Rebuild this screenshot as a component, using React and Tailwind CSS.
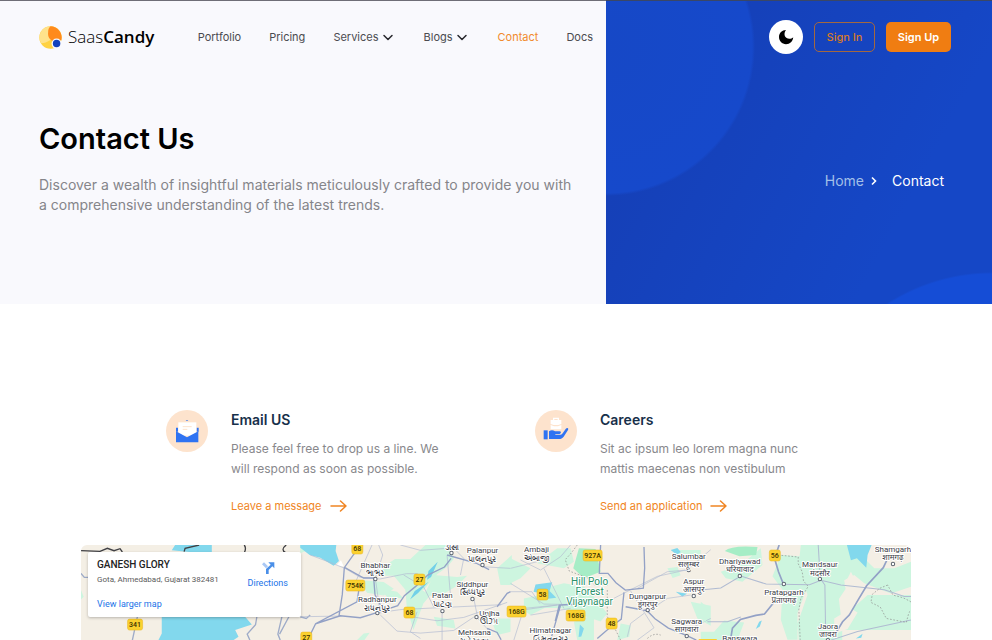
import React from "react";

const UI = "font-['Inter',sans-serif]";

function Logo() {
  return (
    <a href="#home" className="flex items-center gap-[6px] text-black">
      <svg width="23" height="23" viewBox="0 0 68 68" aria-hidden="true">
        <circle cx="34" cy="34" r="33" fill="#ffd243" />
        <path d="M34 1A33 33 0 0 0 6 51C26 50 44 38 42 20C41 11 38 5 34 1Z" fill="#ffe28b" />
        <path d="M34 1A33 33 0 0 1 66 42C60 44 55 42 48 47C34 44 25 34 27 19C27 11 29 5 34 1Z" fill="#ff8a1c" />
        <circle cx="52" cy="52" r="15" fill="#f9f9fd" />
        <circle cx="52" cy="52" r="11" fill="#1443bd" />
      </svg>
      <span className="font-['Open_Sans',sans-serif] text-[17px] leading-6 font-light">
        Saas<b className="font-semibold">Candy</b>
      </span>
    </a>
  );
}

function Chevron() {
  return (
    <svg width="16" height="16" viewBox="0 0 16 16" fill="none" stroke="#26262b" strokeWidth="1.5" strokeLinecap="round" strokeLinejoin="round" aria-hidden="true">
      <path d="M4 6.5l4 4 4-4" />
    </svg>
  );
}

const links = [
  { label: "Portfolio" },
  { label: "Pricing" },
  { label: "Services", menu: true },
  { label: "Blogs", menu: true },
  { label: "Contact", active: true },
  { label: "Docs" },
];

function Nav() {
  return (
    <nav className="flex items-center gap-7 text-[11px] leading-4 text-[#4b4b50]">
      {links.map((l) => (
        <a key={l.label} href={"#" + l.label.toLowerCase()} className={l.active ? "text-[#f18a2c]" : "flex items-center gap-px"}>
          {l.label}
          {l.menu && <Chevron />}
        </a>
      ))}
    </nav>
  );
}

function Hero() {
  return (
    <section className="grid grid-cols-[606fr_386fr]">
      <div className="border-t border-[#6f6e77] bg-[#f9f9fd] pb-[89px] pl-[39px]">
        <header className="flex h-[72px] items-center justify-between pr-[13px]">
          <Logo />
          <Nav />
        </header>
        <h1 className="mt-[46px] text-[29px] leading-10 font-semibold text-black">Contact Us</h1>
        <p className="mt-4 max-w-[540px] text-[14px] leading-5 text-[#85858a]">
          Discover a wealth of insightful materials meticulously crafted to provide you with a comprehensive understanding of the latest trends.
        </p>
      </div>
      <div className="border-t border-[#3a4766] bg-[radial-gradient(circle_at_0_46px,#1648c6_0,#1649cb_146px,transparent_149px),radial-gradient(circle_at_386px_465px,#154dd6_0,#154dd6_192px,transparent_194px),linear-gradient(118deg,#1540b8_20%,#1547c6_75%)]">
        <div className="flex h-[72px] items-center justify-end gap-[11px] pr-[41px]">
          <button type="button" aria-label="Dark mode" className="flex size-[34px] items-center justify-center rounded-full bg-white">
            <svg width="16" height="16" viewBox="0 0 16 16" fill="#000" aria-hidden="true">
              <path d="M8 1C4 1 1 4.100 1 8s3 7.200 7 7.200c3.900 0 7-2.900 7.200-7C13.300 10 10.500 10.300 8.300 8.700C6 7 6 3.500 8 1Z" />
            </svg>
          </button>
          <button type="button" className="h-[30px] w-[61px] rounded-[5px] border border-[#a4683f] text-[11px] font-medium text-[#d97a24]">
            Sign In
          </button>
          <button type="button" className="h-[30px] w-[65px] rounded-[5px] bg-[#f07d12] text-[11px] font-semibold text-white">
            Sign Up
          </button>
        </div>
        <nav aria-label="Breadcrumb" className="mt-24 flex items-center justify-end pr-12 text-[14px] leading-6 text-white">
          <a href="#home" className="text-[#a3c0e8]">Home</a>
          <svg className="mr-[10px] ml-[2px]" width="16" height="16" viewBox="0 0 16 16" fill="none" stroke="#fff" strokeWidth="1.600" aria-hidden="true">
            <path d="M6 4.500l3.500 3.500L6 11.500" />
          </svg>
          <span>Contact</span>
        </nav>
      </div>
    </section>
  );
}

function MailIcon() {
  return (
    <svg width="42" height="42" viewBox="0 0 126 126" aria-hidden="true">
      <circle cx="63" cy="63" r="63" fill="#fde3cd" />
      <path d="M59 33l4-3 4 3zM30 53l6 0v12h-6zM92 53l6 0v12h-6z" fill="#2f73f2" />
      <path d="M37 37h54v40H37z" fill="#fff" />
      <path d="M50 50h27M50 58h14" stroke="#fde3cd" strokeWidth="3" />
      <path d="M30 64l33 18 34-18v33H30z" fill="#2f73f2" />
    </svg>
  );
}

function CareersIcon() {
  return (
    <svg width="42" height="42" viewBox="0 0 126 126" aria-hidden="true">
      <circle cx="63" cy="63" r="63" fill="#fde3cd" />
      <path d="M56 30V25h14v5" fill="none" stroke="#fff" strokeWidth="4" />
      <path d="M47 30h32v12l-9 3h-14l-9-3z" fill="#fff" />
      <path d="M47 45l10 4h12l10-4v13H47z" fill="#fff" />
      <path d="M26 61h12v27H26z" fill="#2f73f2" />
      <path d="M42 64c6-4 12-4 18 0h14c5 0 5 7 0 8H61v2h16c3 0 4-2 6-4l9-13c4-5 10-3 7 3L86 80c-4 5-8 7-14 7H42z" fill="#2f73f2" />
    </svg>
  );
}

function Feature({ icon, title, text, link }) {
  return (
    <article className="flex gap-[23px] pl-[39px]">
      <div className="shrink-0">{icon}</div>
      <div className="max-w-[220px]">
        <h2 className="text-[14px] leading-5 font-semibold text-[#17304a]">{title}</h2>
        <p className="mt-[9px] text-[12px] leading-5 text-[#88888c]">{text}</p>
        <a href="#contact" className="mt-[17px] flex items-center gap-2 text-[11px] leading-5 text-[#f08523]">
          {link}
          <svg width="17" height="12" viewBox="0 0 17 12" fill="none" stroke="currentColor" strokeWidth="1.500" strokeLinecap="round" strokeLinejoin="round" aria-hidden="true">
            <path d="M1 6h15M10.500 1l5.500 5-5.500 5" />
          </svg>
        </a>
      </div>
    </article>
  );
}

const places = [
  ["Bhabhar", 294, 23, "ભાભર", 31],
  ["Radhanpur", 296, 57, "રાધનપુર", 66],
  ["", 371, 0, "ડીસા", 5],
  ["Palanpur", 401, 8, "પાલનપુર", 17],
  ["Siddhpur", 391, 42, "સિધ્ધપુર", 50],
  ["Patan", 361, 53, "પાટણ", 62],
  ["Unjha", 408, 71, "ઊંઝા", 79],
  ["Mehsana", 393, 90, "મહેસાણા", 99],
  ["Ambaji", 455, 7, "અંબાજી", 16],
  ["Himatnagar", 469, 88, "હિંમતનગર", 97],
  ["Dungarpur", 566, 54, "डूंगरपुर", 62],
  ["Salumbar", 607, 14, "सलूम्बर", 22],
  ["Aspur", 612, 39, "आसपुर", 47],
  ["Sagwara", 605, 79, "सागवारा", 87],
  ["Dhariyawad", 658, 19, "धरियावाद", 27],
  ["Mandsaur", 738, 22, "मंदसौर", 31],
  ["Pratapgarh", 702, 50, "प्रतापगढ़", 58],
  ["Shamgarh", 811, 7, "शामगढ़", 15],
  ["Jaora", 746, 84, "जावरा", 92],
  ["Banswara", 658, 96, "", 99],
];

const shields = [
  ["341", 54, 79, 15],
  ["68", 276, 3, 11],
  ["754K", 274, 40, 19],
  ["27", 338, 34, 11],
  ["68", 328, 67, 11],
  ["27", 225, 92, 11],
  ["58", 461, 49, 11],
  ["168G", 435, 66, 19],
  ["168G", 494, 70, 19],
  ["927A", 511, 10, 19],
  ["48", 530, 78, 11],
  ["56", 693, 10, 11],
];

const dots = [[294, 34], [296, 68], [370, 8], [401, 20], [391, 54], [361, 66], [395, 72], [607, 25], [612, 51], [566, 65], [605, 91], [658, 31], [702, 39], [738, 34], [811, 19], [746, 95]];

function MapCanvas() {
  return (
    <svg className="absolute inset-0 size-full" viewBox="0 0 829 95" preserveAspectRatio="xMidYMin slice" role="img" aria-label="Map around Gota, Ahmedabad">
      <rect width="829" height="400" fill="#f4efe5" />
      <g transform="translate(-11 -10) scale(.3333)">
        <path d="M315 30H425V52H365L305 46ZM275 240H520L545 268L495 285L505 305L490 315H265L275 295Z" fill="#82d8ed" />
        <path d="M33 165l8 20-8 8zM690 30h60l-60 25z" fill="#cdf5df" />
        <path d="M33 47L90 49l22-9 20 7 18-6 7 10M342 50l3-10 42-10M522 30q7 8 1 22M648 30q-18 14-2 23" fill="none" stroke="#404044" strokeWidth="4" />
        <g fill="none" stroke="#9eabc8" strokeWidth="4">
          <path d="M33 115l10 12h12M202 245L187 315M560 245l-4 24-25 28 8 18M635 245l-12 52 7 18M656 245l-28 52M690 245l18 5 12-10" />
        </g>
      </g>
      <g transform="translate(219 -10) scale(.3333)">
        <g fill="#cdf5df">
          <path d="M375 30h70l15 42-20 24-30 22-40 46-44 14-16-20-30-36-40 0-10-14 54-36 46 0z" />
          <path d="M175 135l75 6 30 20-30 20-50-8zM400 120l70 6 30-4-30 30-50 30-50 0zM240 160l50 10 20 20-50-4zM590 100l44-40v90l-34 0zM170 315l20-20 18-2-16 22zM400 245l60 10 5 25-55-8zM570 250l60 0v40l-40 10z" />
          <path d="M315 165l50 0 24 16-20 24-30 80-20-70z" />
        </g>
        <path d="M0 30h108l-2 18 10 30-16 14-40-24-32-8-28-22z" fill="#82d8ed" />
        <path d="M122 76l8 18-22-2z" fill="#fff" />
        <path d="M412 80l-20 46-12 8 4-26zM385 140l-42 28-14 25 24-19z" fill="#72d0e8" />
        <g fill="none" stroke="#b0bad2" strokeWidth="2">
          <path d="M30 60q60 22 104 40l44 26 60 6 80-16 34 0M215 30l-48 108M235 30l12 30-22 70 14 100M0 245l120-2M232 235q70-15 120-14l250-12M320 243l90 14 80-10 130-45M350 230l-20 60 30 20M425 228v87M440 60l10 120M450 30l40 40-10 50M545 95l85 5M300 30l60 16 80-6M310 120l60 36 30 60M240 240l50 48 70 6 100-8 60-40M520 190l12 60 40 44" />
        </g>
        <g fill="none" stroke="#93a1c6" strokeWidth="4">
          <path d="M180 30l-48 68-6 80-10 65M180 135l-10 65-124 66-24 49M46 266l74-24 60 6 52-16 60-20 20-30 34-28 36-34 50-24 20-26M134 98l56 31h30l4 50 16 30M440 60l86 24 40 20M590 215l30-40 10-5M560 280l30 12 12 22" />
        </g>
      </g>
      <g transform="translate(429 -10) scale(.3333)">
        <g fill="#cdf5df">
          <path d="M0 70l60 30-30 30L0 145zM80 85l60-45h40l10 40-30 20zM80 165l80-20 60 10 30 30 40 50-20 24-60-20-60-20-60 0zM490 45h80v30l-60-6zM470 100l30-4 10 25-24 8zM540 200l60 12v60l-40-22zM40 190l50-10 30 30-60 30-20-14zM330 265l30 6-4 34-36 10zM190 260l60-20 0 75-50 0z" />
        </g>
        <path d="M205 40l50 2 15 68-50 20-32-30z" fill="#a6edc6" />
        <path d="M75 148l50-6-8 26 20 20-30 4-10-16-28-6zM208 268l12 12-8 24-8 2zM480 45l20-6 10 12-12 8zM495 170l34 6-14 8z" fill="#82d8ed" />
        <g fill="none" stroke="#b3bcd2" strokeWidth="2">
          <path d="M0 145l100 62 110 2M30 75l60 30 60-40 30-35M100 100l60 120M0 170l64 0 24 36M0 230l140-20 90 0M290 200l70-36 80-40 90-20 70-60M380 160l90-50 60-5M360 168l70 110-50 37M410 230l60-40 70-10M520 290l80-40M140 210l-100 10-30 95M60 240l120-20M400 235l-40 30-10 40M0 100l80-20" />
        </g>
        <g fill="none" stroke="#93a1c6" strokeWidth="4">
          <path d="M270 30l-4 85 26 0 24 28 28 22 54-6 4-60-2-63M340 172l-8 80-32 24-40 34M134 258l12-48 60-4M345 215l64 12 24 24 40 28 54 22 30 14M150 210l-20 70-10 35" />
        </g>
        <path d="M200 30l-18 24-18 20 12 34 58 22 18 20 40 0M290 165v80l16 24M310 275l20 40M410 310q20-18 40-10" fill="none" stroke="#8c8c8c" strokeWidth="2" strokeDasharray="5 5" />
      </g>
      <g transform="translate(619 -10) scale(.3333)">
        <g fill="#cdf5df">
          <path d="M60 110l60-20 60-50 5 50-60 50-50-10zM240 60l56 4 24 90-30 80 0 80h-30l-20-60 5-90-30-40zM300 30h150l70 70 60 0 50-20v75l-60 20-80-30-30-25-30 16 4 26-20 30 10 85 0 68H296l-6-80 30-86-28-80z" />
          <path d="M500 180l130 0v105H380l70-60zM0 200l18 14-2 44-16 5zM0 290l40 0 30-34 60 6-20 53H0z" />
        </g>
        <path d="M72 48q20-18 98-12l-4 24-50 4z" fill="#a6edc6" />
        <path d="M430 150l20-40 15 30 10 24-30 6zM400 250l50-30 20 12-30 50-40 14z" fill="#f4efe5" />
        <path d="M438 30h74l-12 30-4 38-28-28-18 6zM175 260l8-4-6 18-12 8zM465 310l20-14-4 12z" fill="#82d8ed" />
        <g fill="none" stroke="#b0bbd2" strokeWidth="3">
          <path d="M0 165l60-6 60-36 76 24 130 2 34-13 60 14 130 14 60 20 80 0M352 30l6 100 14 20 2 130M20 260l60 0 40-14M390 315l80-26 160-34" />
        </g>
        <g fill="none" stroke="#93a1c6" strokeWidth="5">
          <path d="M235 30l-14 40 12 40 15 38M225 195l-34 42-26 4-46 12-24 26-6 36M565 60l-18 38-50 54-24 40-28 48-20 20-24 40" />
        </g>
        <path d="M232 60l60 6 0 20 12 24 4 28 14 16-22 36-6 34 4 90M560 150l-24 10-22 18-4 24 28 14 18 34 60 12 8-30 22-20-20-14-20-10-30-8z" fill="none" stroke="#8c8c8c" strokeWidth="2" strokeDasharray="5 5" />
      </g>
      {dots.map(([x, y]) => (
        <circle key={x + "-" + y} cx={x} cy={y} r="1.700" fill="#fff" stroke="#5d6470" />
      ))}
      {shields.map(([t, x, y, w]) => (
        <g key={t + x}>
          <rect x={x - w / 2} y={y - 5} width={w} height="11" rx="2" fill="#fbd12f" stroke="#e8b51b" strokeWidth=".5" />
          <text x={x} y={y + 3} textAnchor="middle" className="font-['Roboto',sans-serif] text-[7px] font-medium" fill="#3b3200">{t}</text>
        </g>
      ))}
      <path d="M617 95v-1h18v1z" fill="#fbd12f" />
      <g textAnchor="middle" className="font-['Roboto','Noto_Sans',sans-serif] text-[8px]" fill="#3c4048" stroke="#fff" strokeWidth="2" strokeLinejoin="round" paintOrder="stroke">
        {places.map(([name, x, y, local, ly]) => (
          <React.Fragment key={name + x}>
            {name && <text x={x} y={y}>{name}</text>}
            {local && <text x={x} y={ly}>{local}</text>}
          </React.Fragment>
        ))}
        <g className="text-[10px]" fill="#2b9169">
          <text x="508" y="40">Hill Polo</text>
          <text x="508" y="50">Forest</text>
          <text x="508" y="60">Vijaynagar</text>
        </g>
      </g>
    </svg>
  );
}

function MapPanel() {
  return (
    <section className="relative mx-[81px] mt-[29px] flex-1 overflow-hidden rounded-t-[6px] font-['Roboto',sans-serif]">
      <MapCanvas />
      <div className="absolute top-[7px] left-[7px] flex w-[213px] justify-between rounded-[2px] bg-white py-[7px] pr-[13px] pl-[9px] shadow-[0_1px_3px_rgba(0,0,0,0.25)]">
        <div>
          <h2 className="text-[10px] leading-3 font-medium text-[#222]">GANESH GLORY</h2>
          <p className="mt-[3px] text-[8px] leading-3 text-[#5b5b5b]">Gota, Ahmedabad, Gujarat 382481</p>
          <a href="#map" className="mt-3 block text-[9px] leading-3 text-[#1a73e8]">View larger map</a>
        </div>
        <a href="#directions" className="flex flex-col items-center pt-[2px] text-[9px] leading-3 text-[#1a73e8]">
          <svg width="14" height="14" viewBox="0 0 42 42" aria-hidden="true">
            <path d="M3 10l6-6 12 12-6 6z" fill="#a9c8f5" />
            <path d="M15 39V24L29 11l-7-7h18v18l-6-6-11 11v12z" fill="#4a8fe8" />
          </svg>
          <span className="mt-[2px]">Directions</span>
        </a>
      </div>
    </section>
  );
}

export default function App() {
  return (
    <main className={UI + " flex min-h-screen flex-col bg-white"}>
      <Hero />
      <section className="mx-auto mt-[106px] grid w-full max-w-[738px] grid-cols-2">
        <Feature icon={<MailIcon />} title="Email US" text="Please feel free to drop us a line. We will respond as soon as possible." link="Leave a message" />
        <Feature icon={<CareersIcon />} title="Careers" text="Sit ac ipsum leo lorem magna nunc mattis maecenas non vestibulum" link="Send an application" />
      </section>
      <MapPanel />
    </main>
  );
}
